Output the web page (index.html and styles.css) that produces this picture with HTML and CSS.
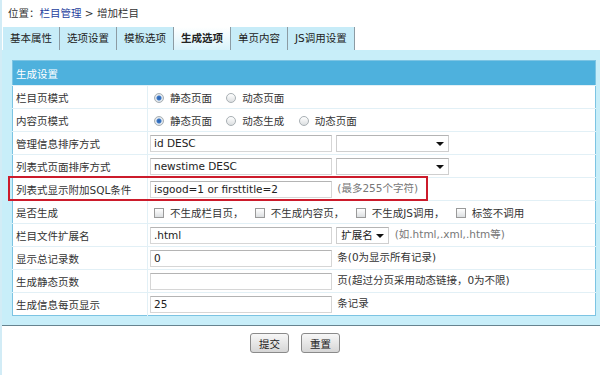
FILE: index.html
```html
<!DOCTYPE html>
<html lang="zh-CN">
<head>
  <meta charset="UTF-8" />
  <title>增加栏目</title>
  <link rel="stylesheet" href="styles.css">
</head>
<body>
  <div class="page">
    <div class="crumb">位置：<a href="#">栏目管理</a> &gt; 增加栏目</div>

    <ul class="tabs">
      <li>基本属性</li>
      <li>选项设置</li>
      <li>模板选项</li>
      <li class="active">生成选项</li>
      <li>单页内容</li>
      <li>JS调用设置</li>
    </ul>

    <div class="panel">
      <table class="form">
        <tr class="head"><td colspan="2">生成设置</td></tr>
        <tr>
          <td class="label">栏目页模式</td>
          <td>
            <label class="opt"><input type="radio" name="listmode" checked>静态页面</label>
            <label class="opt"><input type="radio" name="listmode">动态页面</label>
          </td>
        </tr>
        <tr>
          <td class="label">内容页模式</td>
          <td>
            <label class="opt"><input type="radio" name="infomode" checked>静态页面</label>
            <label class="opt"><input type="radio" name="infomode">动态生成</label>
            <label class="opt"><input type="radio" name="infomode">动态页面</label>
          </td>
        </tr>
        <tr>
          <td class="label">管理信息排序方式</td>
          <td>
            <input class="text" type="text" value="id DESC">
            <span class="select wide"><select><option></option></select></span>
          </td>
        </tr>
        <tr>
          <td class="label">列表式页面排序方式</td>
          <td>
            <input class="text" type="text" value="newstime DESC">
            <span class="select wide"><select><option></option></select></span>
          </td>
        </tr>
        <tr>
          <td class="label">列表式显示附加SQL条件</td>
          <td>
            <input class="text" type="text" value="isgood=1 or firsttitle=2">
            <span class="note">(最多255个字符)</span>
          </td>
        </tr>
        <tr>
          <td class="label">是否生成</td>
          <td>
            <label class="chk"><input type="checkbox">不生成栏目页，</label>
            <label class="chk"><input type="checkbox">不生成内容页，</label>
            <label class="chk"><input type="checkbox">不生成JS调用，</label>
            <label class="chk"><input type="checkbox">标签不调用</label>
          </td>
        </tr>
        <tr>
          <td class="label">栏目文件扩展名</td>
          <td>
            <input class="text" type="text" value=".html">
            <span class="select ext"><select><option>扩展名</option></select></span>
            <span class="note">(如.html,.xml,.htm等)</span>
          </td>
        </tr>
        <tr>
          <td class="label">显示总记录数</td>
          <td>
            <input class="text" type="text" value="0">
            <span class="unit">条(0为显示所有记录)</span>
          </td>
        </tr>
        <tr>
          <td class="label">生成静态页数</td>
          <td>
            <input class="text" type="text" value="">
            <span class="unit">页(超过分页采用动态链接，0为不限)</span>
          </td>
        </tr>
        <tr>
          <td class="label">生成信息每页显示</td>
          <td>
            <input class="text" type="text" value="25">
            <span class="unit">条记录</span>
          </td>
        </tr>
      </table>

      <!-- annotation box around the SQL row -->
      <div class="mark"></div>
    </div>

    <div class="actions">
      <button type="submit">提交</button>
      <button type="reset">重置</button>
    </div>
  </div>
</body>
</html>
```

FILE: styles.css
```css
body {
  margin: 0;
  font-family: "DejaVu Sans", "Noto Sans CJK SC", sans-serif;
  font-size: 10.5px;
  color: #333;
  background: #fff;
}

.page {
  border-left: 2px solid #d2ecf6;
  min-height: 375px;
  box-sizing: border-box;
}

.crumb {
  height: 27px;
  padding: 6px 0 0 6px;
  box-sizing: border-box;
  line-height: 15px;
}

.crumb a {
  color: #1f3f9e;
  text-decoration: none;
}

.tabs {
  display: flex;
  list-style: none;
  margin: 0;
  padding: 0 0 0 1px;
  height: 23px;
}

.tabs li {
  background: #c7ecf8;
  padding: 0 7px;
  line-height: 23px;
  border-right: 1px solid #8c9ba3;
  color: #222;
}

.tabs li.active {
  background: linear-gradient(#ffffff, #d9f3fb);
  font-weight: bold;
}

.panel {
  position: relative;
  background: #c8eef9;
  padding: 10px 4px 9px 10px;
  border-bottom: 1px solid #66838f;
}

.form {
  width: 100%;
  border-collapse: collapse;
  background: #fff;
  border: 1px solid #7cc4e3;
}

.form td {
  height: 22px;
  padding: 0;
  border-top: 1px solid #e2f0f6;
  vertical-align: middle;
  white-space: nowrap;
}

.form .head td {
  height: 24px;
  background: #4eb1dd;
  color: #fff;
  padding-left: 3px;
  border-top: none;
}

.form td.label {
  width: 131px;
  padding-left: 3px;
  border-right: 1px solid #e2f0f6;
}

.form td + td {
  padding-left: 2px;
}

.text {
  width: 182px;
  height: 17px;
  box-sizing: border-box;
  border: 1px solid #d6d6d6;
  border-top-color: #b4b4b4;
  padding: 0 3px;
  font: inherit;
  color: #222;
  vertical-align: middle;
}

.select {
  position: relative;
  display: inline-block;
  margin-left: 1px;
  vertical-align: middle;
}

.select select {
  appearance: none;
  height: 17px;
  border: 1px solid #cfcfcf;
  border-top-color: #b4b4b4;
  background: #fff;
  font: inherit;
  color: #222;
  padding: 0 4px;
  display: block;
}

.select::after {
  content: "";
  position: absolute;
  top: 7px;
  right: 5px;
  border: 4px solid transparent;
  border-top: 4px solid #111;
  border-bottom: none;
}

.select.wide select {
  width: 113px;
}

.select.ext select {
  width: 53px;
}

.note {
  color: #777;
  margin-left: 2px;
}

.unit {
  margin-left: 2px;
}

.opt {
  margin-right: 7px;
}

.opt input,
.chk input {
  appearance: none;
  width: 10px;
  height: 10px;
  margin: 0 6px 0 4px;
  vertical-align: -1px;
  border: 1px solid #a9b0b4;
  background: linear-gradient(#ffffff, #dcdfe1);
}

.opt input {
  border-radius: 50%;
}

.opt input:checked {
  background: radial-gradient(circle, #2a5fae 0, #3b78c6 2px, #e8edf2 3px, #cfd5da 5px);
}

.chk {
  margin-right: 4px;
}

.chk input {
  border-color: #9a9a9a;
}

.mark {
  position: absolute;
  top: 126px;
  left: 6px;
  width: 420px;
  height: 25px;
  box-sizing: border-box;
  border: 2px solid #cc1b2b;
}

.actions {
  display: flex;
  gap: 12px;
  padding: 7px 0 0 248px;
}

.actions button {
  width: 39px;
  height: 20px;
  padding: 0;
  font: inherit;
  color: #222;
  border: 1px solid #8a8a8a;
  border-radius: 3px;
  background: linear-gradient(#f7f7f7, #d6d6d6);
}
```
